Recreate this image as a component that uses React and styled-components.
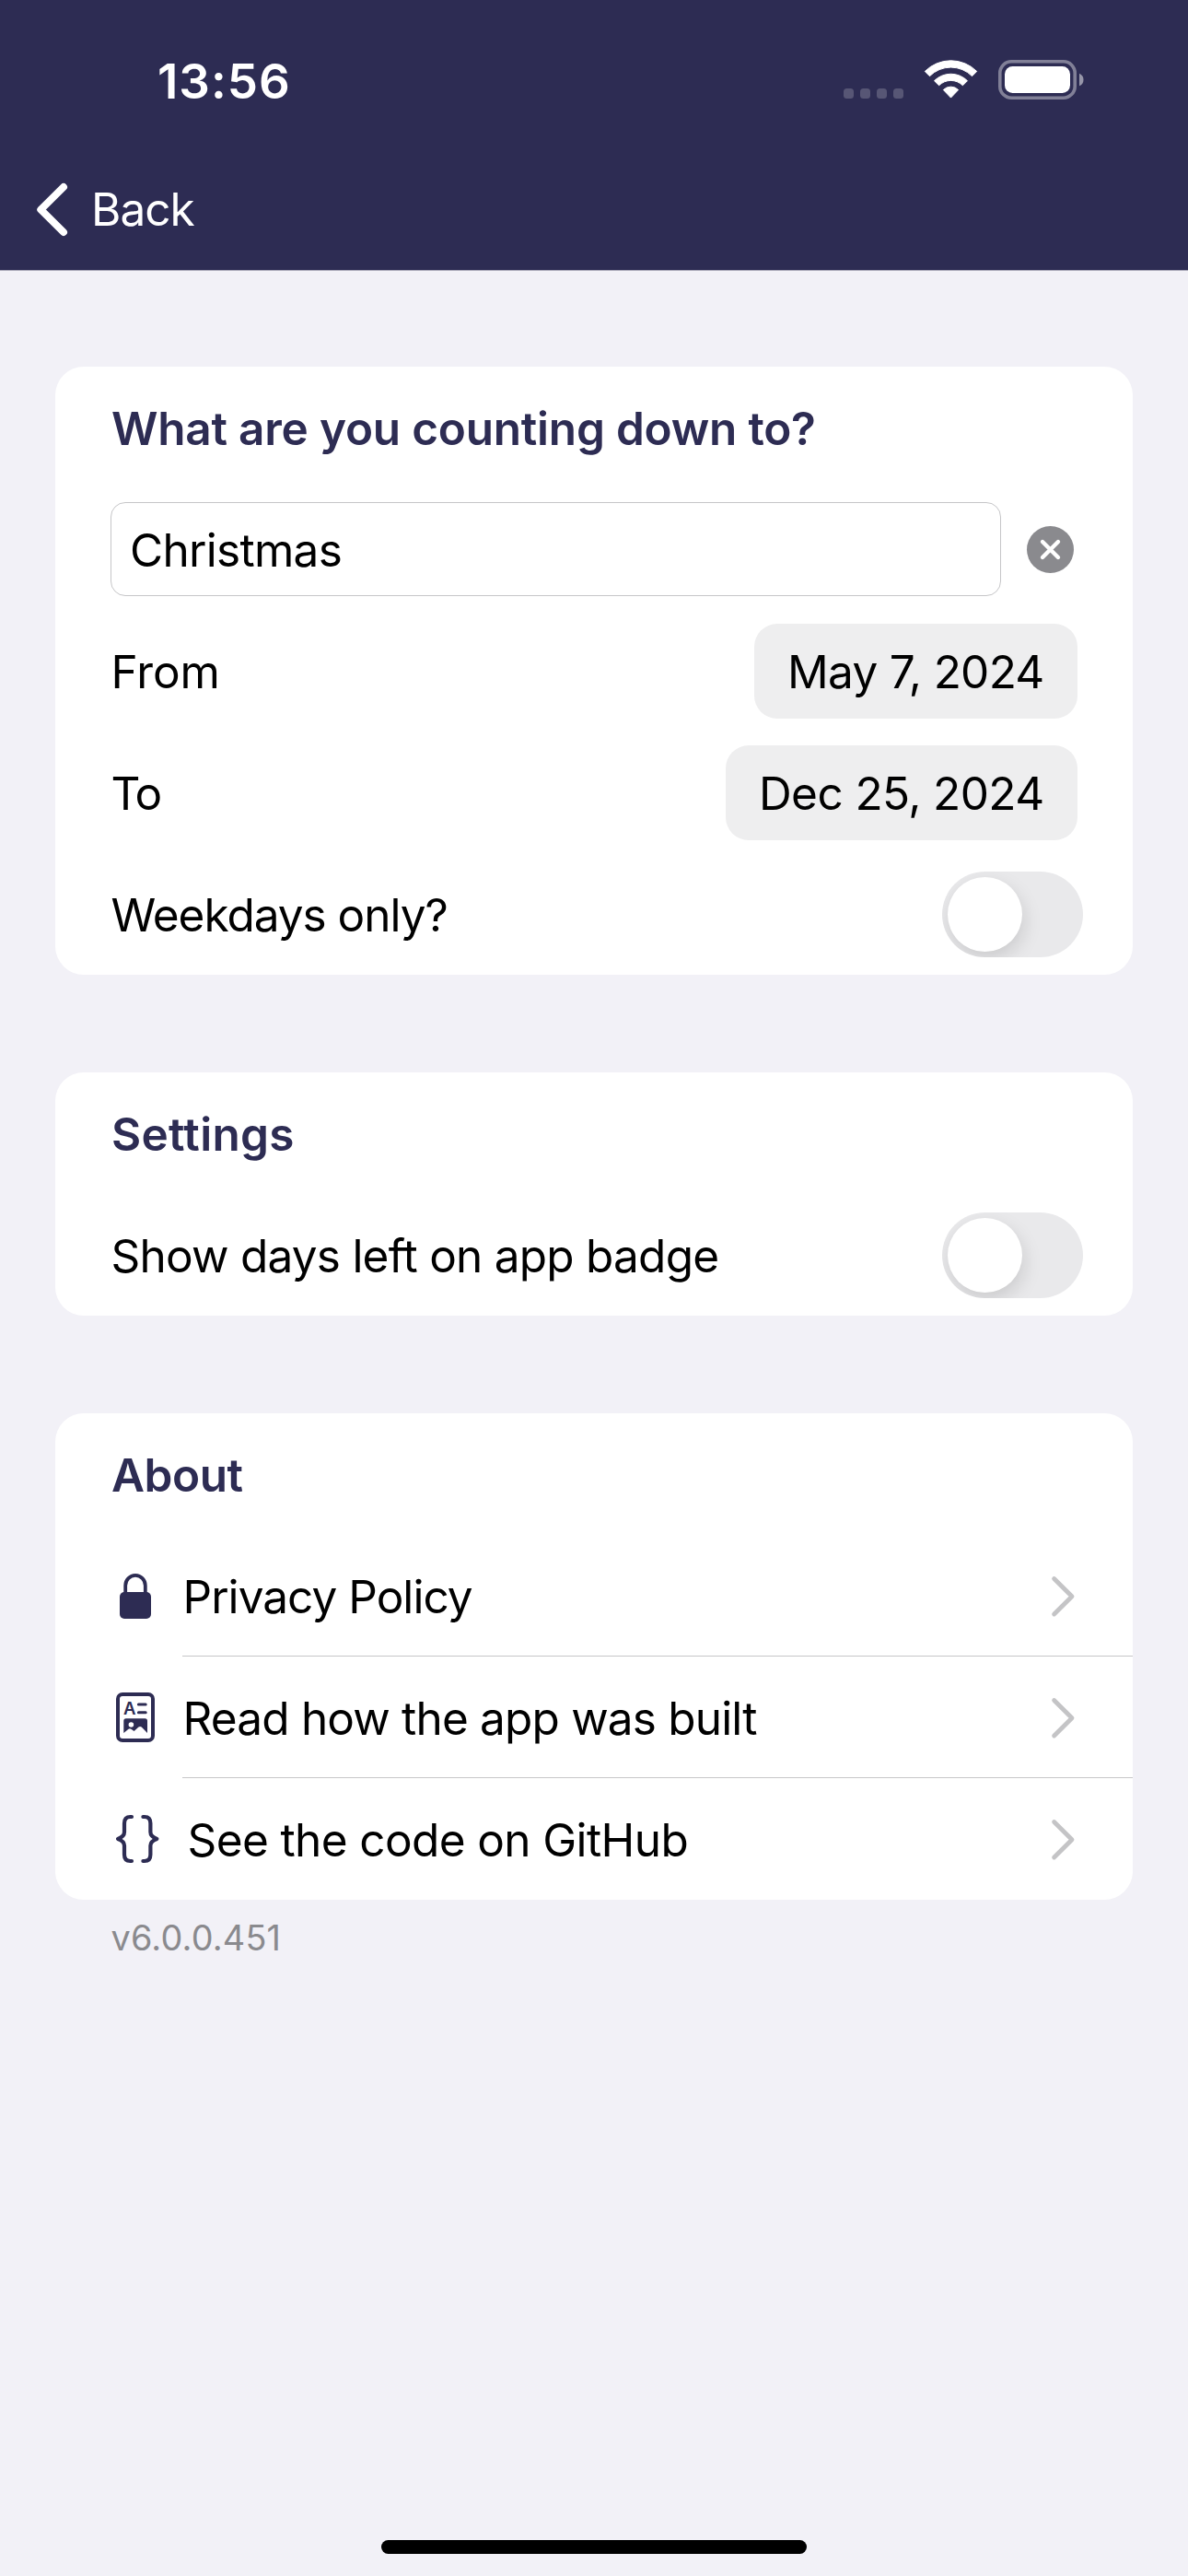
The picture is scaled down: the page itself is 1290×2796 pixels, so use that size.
import React, { useState } from 'react';
import styled, { createGlobalStyle, ThemeProvider } from 'styled-components';

const theme = {
  navy: '#2d2c53',
  page: '#f2f1f7',
  card: '#ffffff',
  text: '#000000',
  muted: '#8a8a8e',
  line: '#c6c6c8',
  chevron: '#c4c4c6',
  pill: '#eeeeef',
  track: '#e9e9eb',
};

const GlobalStyle = createGlobalStyle`
  *, *::before, *::after { box-sizing: border-box; }
  body {
    margin: 0;
    background: ${theme.page};
    font-family: Inter, "Liberation Sans", sans-serif;
    font-size: 49.5px;
    color: ${theme.text};
  }
  button, input { font: inherit; color: inherit; border: 0; padding: 0; margin: 0; background: none; }
  svg { display: block; flex: none; overflow: visible; }
`;

const Screen = styled.div`
  display: flex;
  flex-direction: column;
  width: 1290px;
  height: 2796px;
  background: ${(p) => p.theme.page};
`;

const Header = styled.header`
  flex: none;
  height: 294px;
  color: #fff;
  background: ${(p) => p.theme.navy};
  border-bottom: 1px solid #a9a8b8;
`;

const StatusBar = styled.div`
  display: flex;
  align-items: center;
  justify-content: space-between;
  height: 162px;
  padding: 14px 113px 0 171px;
`;

const Time = styled.span`
  font-size: 52.8px;
  font-weight: 600;
  letter-spacing: 1px;
`;

const StatusIcons = styled.div`
  display: flex;
  align-items: flex-end;
  gap: 23px;
  margin-top: -3px;
`;

const Dots = styled.div`
  display: flex;
  gap: 7px;
  margin-bottom: 1px;
`;

const Dot = styled.i`
  width: 11px;
  height: 11px;
  border-radius: 3.5px;
  background: rgba(255, 255, 255, 0.2);
`;

const NavBar = styled.nav`
  display: flex;
  align-items: center;
  height: 131px;
  padding-left: 40px;
`;

const BackButton = styled.button`
  display: flex;
  align-items: center;
  gap: 26px;
  letter-spacing: -1px;
`;

const BackLabel = styled.span`
  padding-bottom: 2px;
`;

const Form = styled.main`
  display: flex;
  flex-direction: column;
  flex: 1;
  gap: 106px;
  padding: 104px 60px 0;
  font-feature-settings: "calt" 0, "liga" 0;
`;

const Card = styled.section`
  border-radius: 31px;
  background: ${(p) => p.theme.card};
`;

const Row = styled.div`
  display: flex;
  align-items: center;
  justify-content: space-between;
  height: 132px;
  padding: 0 60px;
`;

const Title = styled.h2`
  margin: 0;
  padding: 2px 0 0 1px;
  font-size: inherit;
  font-weight: 600;
  color: ${(p) => p.theme.navy};
  letter-spacing: ${(p) => p.$track}px;
`;

const Label = styled.span`
  padding: 2px 0 0 0.5px;
  white-space: nowrap;
  letter-spacing: ${(p) => p.$track}px;
`;

const TextField = styled.input`
  width: 967px;
  height: 102px;
  padding: 2px 20px 0 20px;
  border: 1px solid ${(p) => p.theme.line};
  border-radius: 16px;
  outline: none;
  letter-spacing: -0.7px;
`;

const ClearButton = styled.button`
  margin: 1px 4px 0 0;
`;

const DatePill = styled.button`
  width: ${(p) => p.$width}px;
  height: 103px;
  margin-top: 1px;
  padding: 1px 0 0 36px;
  border-radius: 25px;
  background: ${(p) => p.theme.pill};
  text-align: left;
  white-space: nowrap;
  letter-spacing: ${(p) => p.$track}px;
`;

const Track = styled.button`
  display: flex;
  align-items: center;
  justify-content: ${(p) => (p.$on ? 'flex-end' : 'flex-start')};
  width: 153px;
  height: 93px;
  margin: 1px -6px 0 0;
  padding: 6px;
  border-radius: 47px;
  overflow: hidden;
  background: ${(p) => (p.$on ? '#34c759' : p.theme.track)};
`;

const Knob = styled.span`
  width: 81px;
  height: 81px;
  border-radius: 50%;
  background: #fff;
  box-shadow: 2px 8px 20px rgba(0, 0, 0, 0.13);
`;

const LinkRow = styled.a`
  display: flex;
  align-items: stretch;
  gap: 30px;
  height: 132px;
  padding-left: 66px;
  color: inherit;
  text-decoration: none;
`;

const IconSlot = styled.span`
  display: flex;
  align-items: center;
  justify-content: flex-start;
  width: ${(p) => p.$width}px;
  padding-left: ${(p) => p.$inset || 0}px;
  color: ${(p) => p.theme.navy};
`;

const LinkBody = styled.span`
  display: flex;
  flex: 1;
  align-items: center;
  justify-content: space-between;
  padding: ${(p) => (p.$divided ? '1px' : '0')} 63px 0 0;
  border-bottom: ${(p) => (p.$divided ? `1px solid ${p.theme.line}` : '0')};
`;

const Version = styled.p`
  margin: 18px 0 0 60.5px;
  font-size: 37.8px;
  line-height: 46px;
  letter-spacing: 0.2px;
  color: ${(p) => p.theme.muted};
`;

const HomeIndicator = styled.div`
  flex: none;
  align-self: center;
  width: 462px;
  height: 15px;
  margin-bottom: 24px;
  border-radius: 8px;
  background: #000;
`;

const WifiIcon = () => (
  <svg width="57" height="43" viewBox="0 0 57.4 43" fill="#fff" stroke="#fff" strokeWidth="1" strokeLinejoin="round">
    <path d="M.3 12.4A40.2 40.2 0 0 1 57.1 12.4L51.9 17.6A32.8 32.8 0 0 0 5.5 17.6Z" />
    <path d="M10.6 22.7A25.6 25.6 0 0 1 46.8 22.7L41.7 27.8A18.4 18.4 0 0 0 15.7 27.8Z" />
    <path d="M20.5 32.6A11.6 11.6 0 0 1 36.9 32.6L28.7 41.2Z" />
  </svg>
);

const BatteryIcon = () => (
  <svg width="93" height="43" viewBox="0 0 93 43">
    <rect x="1.8" y="1.8" width="81.4" height="39.4" rx="12.5" fill="none" stroke="#fff" strokeOpacity=".4" strokeWidth="3.6" />
    <rect x="7" y="7" width="71" height="29" rx="8.5" fill="#fff" />
    <path d="M88 14.7a7.4 7.4 0 0 1 0 13.6Z" fill="#fff" fillOpacity=".5" />
  </svg>
);

const BackIcon = () => (
  <svg width="33" height="57" viewBox="0 0 33 57" fill="none" stroke="#fff" strokeWidth="8" strokeLinecap="round" strokeLinejoin="round">
    <path d="M29 4 4.3 28.5 29 53" />
  </svg>
);

const ClearIcon = () => (
  <svg width="51" height="51" viewBox="0 0 51 51">
    <circle cx="25.5" cy="25.5" r="25.5" fill={theme.muted} />
    <path d="M17 17 34 34M34 17 17 34" stroke="#fff" strokeWidth="4.4" strokeLinecap="round" />
  </svg>
);

const ChevronIcon = () => (
  <svg width="25" height="43" viewBox="0 0 25 43" fill="none" stroke={theme.chevron} strokeWidth="4.8" strokeLinecap="round" strokeLinejoin="round">
    <path d="M2.6 2.5 22 21.7 2.6 41" />
  </svg>
);

const LockIcon = () => (
  <svg width="34" height="49" viewBox="0 0 34 49">
    <path d="M6.2 22V12.9a10.8 11 0 0 1 21.6 0V22" fill="none" stroke="currentColor" strokeWidth="3.8" />
    <rect y="20" width="34" height="29" rx="5" fill="currentColor" />
  </svg>
);

const ArticleIcon = () => (
  <svg width="42" height="54" viewBox="0 0 42 54" fill="currentColor">
    <rect x="2" y="2" width="38" height="50" rx="5" fill="none" stroke="currentColor" strokeWidth="4" />
    <text x="8" y="24" fontSize="18.5" fontWeight="600">A</text>
    <path d="M24.4 13.1h7.8M24.4 21.8h7.8" stroke="currentColor" strokeWidth="3" strokeLinecap="round" />
    <path
      fillRule="evenodd"
      d="M8.3 30.8a2.5 2.5 0 0 1 2.5-2.5h20.7a2.5 2.5 0 0 1 2.5 2.5V44l-6.3-6.4q-1.6-1.2-3.2 0L19.6 42l-3.2-2.3q-1.5-.9-2.9.1L8.3 44ZM13.6 35a2.8 2.8 0 1 0 5.6 0 2.8 2.8 0 1 0-5.6 0Z"
    />
  </svg>
);

const BracesIcon = () => (
  <svg width="46.4" height="52" viewBox="0 0 46.4 52" fill="none" stroke="currentColor" strokeWidth="4.2" strokeLinecap="round" strokeLinejoin="round">
    <path d="M17 2H15.5Q9 2 9 9V18.5Q9 23.5 2 25.9 9 28.3 9 33.3V43Q9 50 15.5 50H17" />
    <path d="M29.4 2h1.5Q37.4 2 37.4 9V18.5Q37.4 23.5 44.4 25.9 37.4 28.3 37.4 33.3V43Q37.4 50 30.9 50H29.4" />
  </svg>
);

const links = [
  { text: 'Privacy Policy', track: -0.96, icon: LockIcon, width: 42, inset: 4 },
  { text: 'Read how the app was built', track: -0.82, icon: ArticleIcon, width: 42 },
  { text: 'See the code on GitHub', track: -0.61, icon: BracesIcon, width: 47 },
];

function Toggle({ label }) {
  const [on, setOn] = useState(false);
  return (
    <Track type="button" role="switch" aria-checked={on} aria-label={label} $on={on} onClick={() => setOn(!on)}>
      <Knob />
    </Track>
  );
}

export default function App() {
  const [name, setName] = useState('Christmas');
  return (
    <ThemeProvider theme={theme}>
      <GlobalStyle />
      <Screen>
        <Header>
          <StatusBar>
            <Time>13:56</Time>
            <StatusIcons>
              <Dots>
                <Dot />
                <Dot />
                <Dot />
                <Dot />
              </Dots>
              <WifiIcon />
              <BatteryIcon />
            </StatusIcons>
          </StatusBar>
          <NavBar>
            <BackButton type="button">
              <BackIcon />
              <BackLabel>Back</BackLabel>
            </BackButton>
          </NavBar>
        </Header>

        <Form>
          <Card>
            <Row>
              <Title $track={-0.22}>What are you counting down to?</Title>
            </Row>
            <Row>
              <TextField value={name} onChange={(e) => setName(e.target.value)} />
              <ClearButton type="button" aria-label="Clear" onClick={() => setName('')}>
                <ClearIcon />
              </ClearButton>
            </Row>
            <Row>
              <Label $track={-0.1}>From</Label>
              <DatePill type="button" $width={351} $track={-0.7}>May 7, 2024</DatePill>
            </Row>
            <Row>
              <Label $track={-2.2}>To</Label>
              <DatePill type="button" $width={382} $track={-0.6}>Dec 25, 2024</DatePill>
            </Row>
            <Row>
              <Label $track={-1.02}>Weekdays only?</Label>
              <Toggle label="Weekdays only?" />
            </Row>
          </Card>

          <Card>
            <Row>
              <Title $track={0.32}>Settings</Title>
            </Row>
            <Row>
              <Label $track={-0.76}>Show days left on app badge</Label>
              <Toggle label="Show days left on app badge" />
            </Row>
          </Card>

          <div>
            <Card>
              <Row>
                <Title $track={-0.45}>About</Title>
              </Row>
              {links.map(({ text, track, icon: Icon, width, inset }, i) => (
                <LinkRow key={text} href="#">
                  <IconSlot $width={width} $inset={inset}>
                    <Icon />
                  </IconSlot>
                  <LinkBody $divided={i < links.length - 1}>
                    <Label $track={track}>{text}</Label>
                    <ChevronIcon />
                  </LinkBody>
                </LinkRow>
              ))}
            </Card>
            <Version>v6.0.0.451</Version>
          </div>
        </Form>
        <HomeIndicator />
      </Screen>
    </ThemeProvider>
  );
}
